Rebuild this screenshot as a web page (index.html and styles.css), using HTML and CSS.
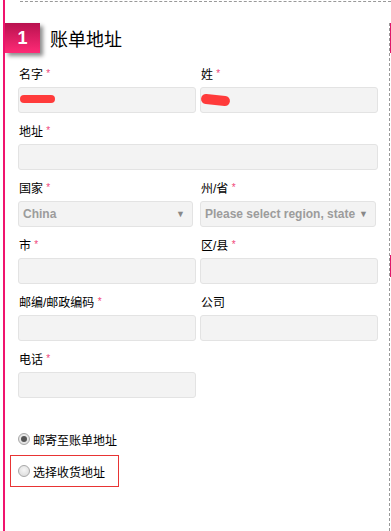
FILE: index.html
```html
<!DOCTYPE html>
<html lang="zh-CN">
<head>
    <meta charset="UTF-8">
    <meta name="viewport" content="width=device-width, initial-scale=1.0">
    <title>账单地址</title>
    <link rel="stylesheet" href="styles.css">
</head>
<body>
    <div class="wrap">
        <div class="top-rule"></div>
        <span class="edge-mark edge-mark-a"></span>
        <span class="edge-mark edge-mark-b"></span>

        <div class="section">
            <div class="section-head">
                <span class="step">1</span>
                <h2>账单地址</h2>
            </div>

            <div class="form-grid">
                <div class="field">
                    <label>名字 <em>*</em></label>
                    <div class="input-wrap">
                        <input type="text" class="input">
                        <span class="redact redact-a"></span>
                    </div>
                </div>
                <div class="field">
                    <label>姓 <em>*</em></label>
                    <div class="input-wrap">
                        <input type="text" class="input">
                        <span class="redact redact-b"></span>
                    </div>
                </div>

                <div class="field wide">
                    <label>地址 <em>*</em></label>
                    <input type="text" class="input">
                </div>

                <div class="field">
                    <label>国家 <em>*</em></label>
                    <div class="select select-left">
                        <span>China</span>
                        <i>&#9660;</i>
                    </div>
                </div>
                <div class="field">
                    <label>州/省 <em>*</em></label>
                    <div class="select select-right">
                        <span>Please select region, state</span>
                        <i>&#9660;</i>
                    </div>
                </div>

                <div class="field">
                    <label>市 <em>*</em></label>
                    <input type="text" class="input">
                </div>
                <div class="field">
                    <label>区/县 <em>*</em></label>
                    <input type="text" class="input">
                </div>

                <div class="field">
                    <label>邮编/邮政编码 <em>*</em></label>
                    <input type="text" class="input">
                </div>
                <div class="field">
                    <label>公司</label>
                    <input type="text" class="input">
                </div>

                <div class="field">
                    <label>电话 <em>*</em></label>
                    <input type="text" class="input">
                </div>
            </div>

            <div class="ship-options">
                <div class="radio-row">
                    <span class="radio checked"></span>
                    <span>邮寄至账单地址</span>
                </div>
                <div class="radio-row boxed">
                    <span class="radio"></span>
                    <span>选择收货地址</span>
                </div>
            </div>
        </div>
    </div>
</body>
</html>
```

FILE: styles.css
```css
body {
    margin: 0;
    padding: 0;
    background: #fff;
    font-family: "Liberation Sans", "Noto Sans CJK SC", sans-serif;
    color: #111;
}

.wrap {
    position: relative;
    margin-left: 3px;
    border-left: 2px solid #f0146e;
    min-height: 531px;
    width: 386px;
}

.top-rule {
    margin-left: 15px;
    padding-top: 1px;
    border-bottom: 1px dashed #999;
}

.edge-mark {
    position: absolute;
    left: 385px;
    width: 2px;
    background: #e0186a;
}

.edge-mark-a {
    top: 23px;
    height: 30px;
}

.edge-mark-b {
    top: 255px;
    height: 22px;
}

.section {
    box-sizing: border-box;
    width: 385px;
    margin-top: 21px;
    min-height: 508px;
    border-right: 1px dashed #999;
}

.section-head {
    display: flex;
    align-items: center;
    height: 30px;
}

.step {
    width: 35px;
    height: 30px;
    display: flex;
    align-items: center;
    justify-content: center;
    color: #fff;
    font-weight: bold;
    font-size: 18px;
    background: linear-gradient(to bottom, #b8124f, #ff2a76);
    box-shadow: 3px 3px 4px rgba(0,0,0,0.45);
}

.section-head h2 {
    margin: 0 0 0 10px;
    font-family: "Liberation Serif", "Noto Sans CJK SC", serif;
    font-weight: normal;
    font-size: 18px;
    color: #000;
}

.form-grid {
    display: grid;
    grid-template-columns: 178px 178px;
    column-gap: 4px;
    padding-left: 13px;
    margin-top: 14px;
}

.field {
    margin-bottom: 11px;
}

.field.wide {
    grid-column: 1 / 3;
}

.field label {
    display: block;
    height: 17px;
    font-size: 12px;
    line-height: 17px;
    margin-bottom: 3px;
    padding-left: 1px;
    color: #000;
}

.field label em {
    font-style: normal;
    color: #f0467a;
    font-size: 10px;
    line-height: 10px;
    vertical-align: 2px;
}

.input,
.select {
    box-sizing: border-box;
    display: block;
    width: 100%;
    height: 26px;
    margin: 0;
    border: 1px solid #e3e3e3;
    border-radius: 3px;
    background: #f3f3f3;
}

.input-wrap {
    position: relative;
}

.redact {
    position: absolute;
    background: #ff3b3b;
    border-radius: 5px;
}

.redact-a {
    left: 2px;
    top: 8px;
    width: 35px;
    height: 8px;
}

.redact-b {
    left: 1px;
    top: 8px;
    width: 29px;
    height: 10px;
    transform: rotate(6deg);
}

.select {
    display: flex;
    align-items: center;
    justify-content: space-between;
    padding: 0 7px 0 4px;
    font-size: 12px;
    font-weight: bold;
    color: #9c9c9c;
}

.select i {
    font-style: normal;
    font-size: 9px;
    color: #888;
}

.select-left {
    width: 175px;
}

.select-right {
    width: 176px;
}

.ship-options {
    margin-top: 20px;
    padding-left: 5px;
}

.radio-row {
    display: flex;
    align-items: center;
    gap: 3px;
    height: 20px;
    padding-left: 8px;
    font-size: 12px;
    color: #000;
}

.radio-row.boxed {
    box-sizing: border-box;
    width: 109px;
    height: 32px;
    margin-top: 6px;
    padding-left: 7px;
    border: 1px solid #e83434;
}

.radio {
    box-sizing: border-box;
    width: 12px;
    height: 12px;
    border-radius: 50%;
    border: 1px solid #a8a8a8;
    background: radial-gradient(circle at 50% 40%, #f6f6f6, #d8d8d8);
    position: relative;
}

.radio.checked::after {
    content: "";
    position: absolute;
    left: 2px;
    top: 2px;
    width: 6px;
    height: 6px;
    border-radius: 50%;
    background: #555;
}
```
